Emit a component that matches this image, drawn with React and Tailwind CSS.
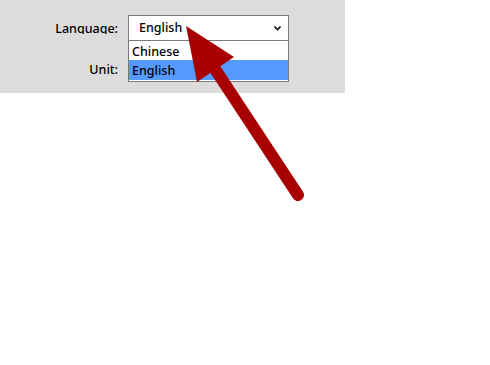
export default function App() {
  const font = { fontFamily: '"Noto Sans", "DejaVu Sans", sans-serif' };
  return (
    <div className="relative w-[490px] h-[365px] bg-white overflow-hidden" style={font}>
      <div className="w-[345px] h-[93px] bg-[#dcdcdc] pt-[15px]">
        <div className="grid grid-cols-[118px_161px] gap-x-[10px] gap-y-[18px] items-center">
          <div className="self-start text-right text-[12.5px] font-medium leading-[28px] h-[19px] overflow-hidden text-black">Language:</div>
          <div className="relative h-[26px] bg-white border border-[#7a7a7a] flex items-center pl-[10px] text-[12.5px] font-medium text-black">
            English
            <svg className="absolute right-[7px] top-[10px]" width="7" height="5" viewBox="0 0 7 5">
              <path d="M0.5 0.5 L3.5 3.5 L6.5 0.5" stroke="#111" strokeWidth="1.6" fill="none" />
            </svg>
          </div>
          <div className="text-right text-[12.5px] font-medium leading-[22px] text-black">Unit:</div>
          <div className="h-[20px]"></div>
        </div>
      </div>

      <div className="absolute left-[128px] top-[40px] w-[161px] bg-white border border-[#7a7a7a] pb-[1px] text-[12.5px] font-medium text-black">
        <div className="h-[19px] leading-[21px] pl-[3px]">Chinese</div>
        <div className="h-[20px] leading-[21px] pl-[3px] bg-[#559aff]">English</div>
      </div>

      <svg className="absolute left-0 top-0" width="490" height="365" viewBox="0 0 490 365">
        <line x1="213" y1="66" x2="298" y2="195" stroke="#a80000" strokeWidth="12" strokeLinecap="round" />
        <polygon points="186,26 234,57 197,82" fill="#a80000" />
      </svg>
    </div>
  );
}
